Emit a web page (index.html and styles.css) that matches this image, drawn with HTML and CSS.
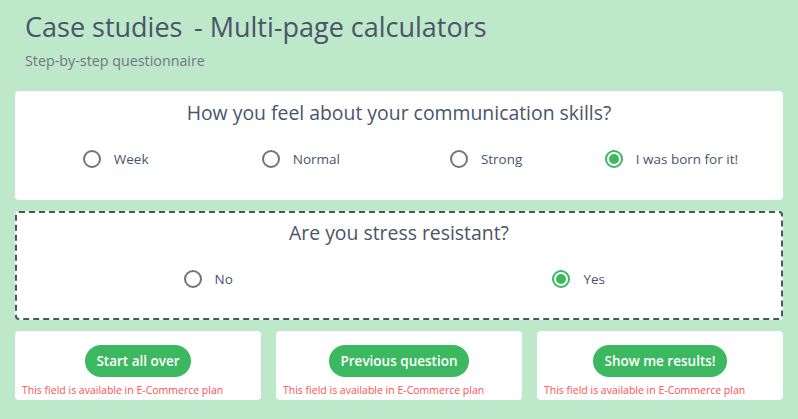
FILE: index.html
```html
<!DOCTYPE html>
<html lang="en">
<head>
<meta charset="utf-8">
<title>Case studies - Multi-page calculators</title>
<link rel="stylesheet" href="styles.css">
</head>
<body>
<div class="page">
  <header class="header">
    <h1 class="title">Case studies&thinsp; - Multi-page calculators</h1>
    <p class="subtitle">Step-by-step questionnaire</p>
  </header>

  <section class="card question">
    <h2 class="q-title">How you feel about your communication skills?</h2>
    <div class="options four">
      <label class="option"><span class="radio"></span><span class="opt-label">Week</span></label>
      <label class="option"><span class="radio"></span><span class="opt-label">Normal</span></label>
      <label class="option"><span class="radio"></span><span class="opt-label">Strong</span></label>
      <label class="option"><span class="radio checked"></span><span class="opt-label">I was born for it!</span></label>
    </div>
  </section>

  <section class="card question dashed">
    <h2 class="q-title">Are you stress resistant?</h2>
    <div class="options two">
      <label class="option"><span class="radio"></span><span class="opt-label">No</span></label>
      <label class="option"><span class="radio checked"></span><span class="opt-label">Yes</span></label>
    </div>
  </section>

  <div class="actions">
    <div class="card action">
      <button class="btn">Start all over</button>
      <p class="note">This field is available in E-Commerce plan</p>
    </div>
    <div class="card action">
      <button class="btn">Previous question</button>
      <p class="note">This field is available in E-Commerce plan</p>
    </div>
    <div class="card action">
      <button class="btn">Show me results!</button>
      <p class="note">This field is available in E-Commerce plan</p>
    </div>
  </div>
</div>
</body>
</html>
```

FILE: styles.css
```css
* { box-sizing: border-box; }

html, body {
  margin: 0;
  padding: 0;
  background: #bde8ca;
  font-family: "Open Sans", "Noto Sans", sans-serif;
  color: #4a5568;
}

.page {
  padding: 8px 15px 0 15px;
}

.header {
  padding: 0 0 0 10px;
  height: 83px;
}

.title {
  margin: 0;
  font-size: 27px;
  font-weight: 400;
  line-height: 38px;
  color: #4a5568;
}

.subtitle {
  margin: 6px 0 0 0;
  font-size: 14.3px;
  line-height: 18px;
  color: #6f7782;
}

.card {
  background: #fff;
  border-radius: 4px;
}

.question {
  border: 2px solid transparent;
  padding: 6px 0 25px 0;
  margin-bottom: 11px;
}

.dashed {
  border: 2px dashed #4a5568;
}

.q-title {
  margin: 0;
  text-align: center;
  font-size: 19.4px;
  font-weight: 400;
  line-height: 28px;
  color: #4a5568;
}

.options {
  display: grid;
  margin: 18px 17px 0 6px;
  height: 28px;
}

.options.four { grid-template-columns: repeat(4, 1fr); }
.options.two { grid-template-columns: repeat(2, 1fr); }

.option {
  display: flex;
  align-items: center;
  justify-content: center;
  font-size: 13.5px;
}

.radio {
  width: 18px;
  height: 18px;
  border: 2px solid #757575;
  border-radius: 50%;
  background: #fff;
  display: flex;
  align-items: center;
  justify-content: center;
  flex: none;
}

.radio.checked {
  border-color: #3cb960;
}

.radio.checked::after {
  content: "";
  width: 10px;
  height: 10px;
  border-radius: 50%;
  background: #3cb960;
}

.opt-label {
  margin-left: 13px;
  color: #4a5568;
}

.actions {
  display: grid;
  grid-template-columns: repeat(3, 1fr);
  column-gap: 15px;
}

.action {
  height: 69px;
  padding: 14px 7px 0 7px;
  display: flex;
  flex-direction: column;
  align-items: center;
}

.btn {
  height: 32px;
  padding: 0 11px;
  border: none;
  border-radius: 16px;
  background: #3cb960;
  color: #fff;
  font-family: inherit;
  font-size: 13.5px;
  font-weight: 600;
}

.note {
  align-self: stretch;
  margin: 6px 0 0 0;
  font-size: 10.5px;
  line-height: 14px;
  color: #ff5050;
  text-align: left;
}
```
